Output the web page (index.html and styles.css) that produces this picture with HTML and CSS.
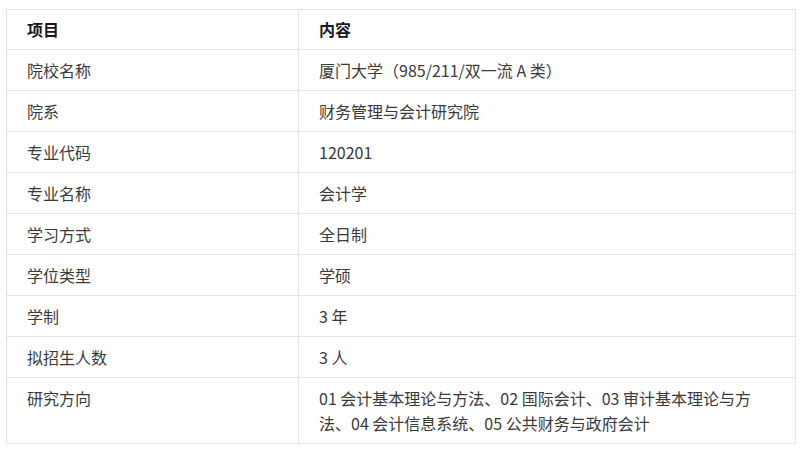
FILE: index.html
```html
<!DOCTYPE html>
<html lang="zh-CN">
<head>
<meta charset="utf-8">
<title>招生信息</title>
<link rel="stylesheet" href="styles.css">
</head>
<body>
<table class="info-table">
  <thead>
    <tr><th class="col-key">项目</th><th class="col-val">内容</th></tr>
  </thead>
  <tbody>
    <tr><td>院校名称</td><td>厦门大学（985/211/双一流 A 类）</td></tr>
    <tr><td>院系</td><td>财务管理与会计研究院</td></tr>
    <tr><td>专业代码</td><td>120201</td></tr>
    <tr><td>专业名称</td><td>会计学</td></tr>
    <tr><td>学习方式</td><td>全日制</td></tr>
    <tr><td>学位类型</td><td>学硕</td></tr>
    <tr><td>学制</td><td>3 年</td></tr>
    <tr><td>拟招生人数</td><td>3 人</td></tr>
    <tr><td>研究方向</td><td>01 会计基本理论与方法、02 国际会计、03 审计基本理论与方法、04 会计信息系统、05 公共财务与政府会计</td></tr>
  </tbody>
</table>
</body>
</html>
```

FILE: styles.css
```css
html, body {
  margin: 0;
  padding: 0;
  background: #ffffff;
}
body {
  padding: 9px 6px 0 6px;
  font-family: "Microsoft YaHei", "Noto Sans CJK SC", "Noto Sans", sans-serif;
  font-size: 16px;
  color: #3a3a3a;
}
.info-table {
  width: 790px;
  border-collapse: collapse;
  table-layout: fixed;
}
.info-table th,
.info-table td {
  box-sizing: border-box;
  border: 1px solid #e4e4e4;
  text-align: left;
  vertical-align: top;
  line-height: 25px;
  padding: 8px 37px 7px 20px;
}
.info-table th {
  font-weight: 700;
  color: #1a1a1a;
  padding-top: 7px;
  padding-bottom: 7px;
}
.col-key {
  width: 292px;
}
```
